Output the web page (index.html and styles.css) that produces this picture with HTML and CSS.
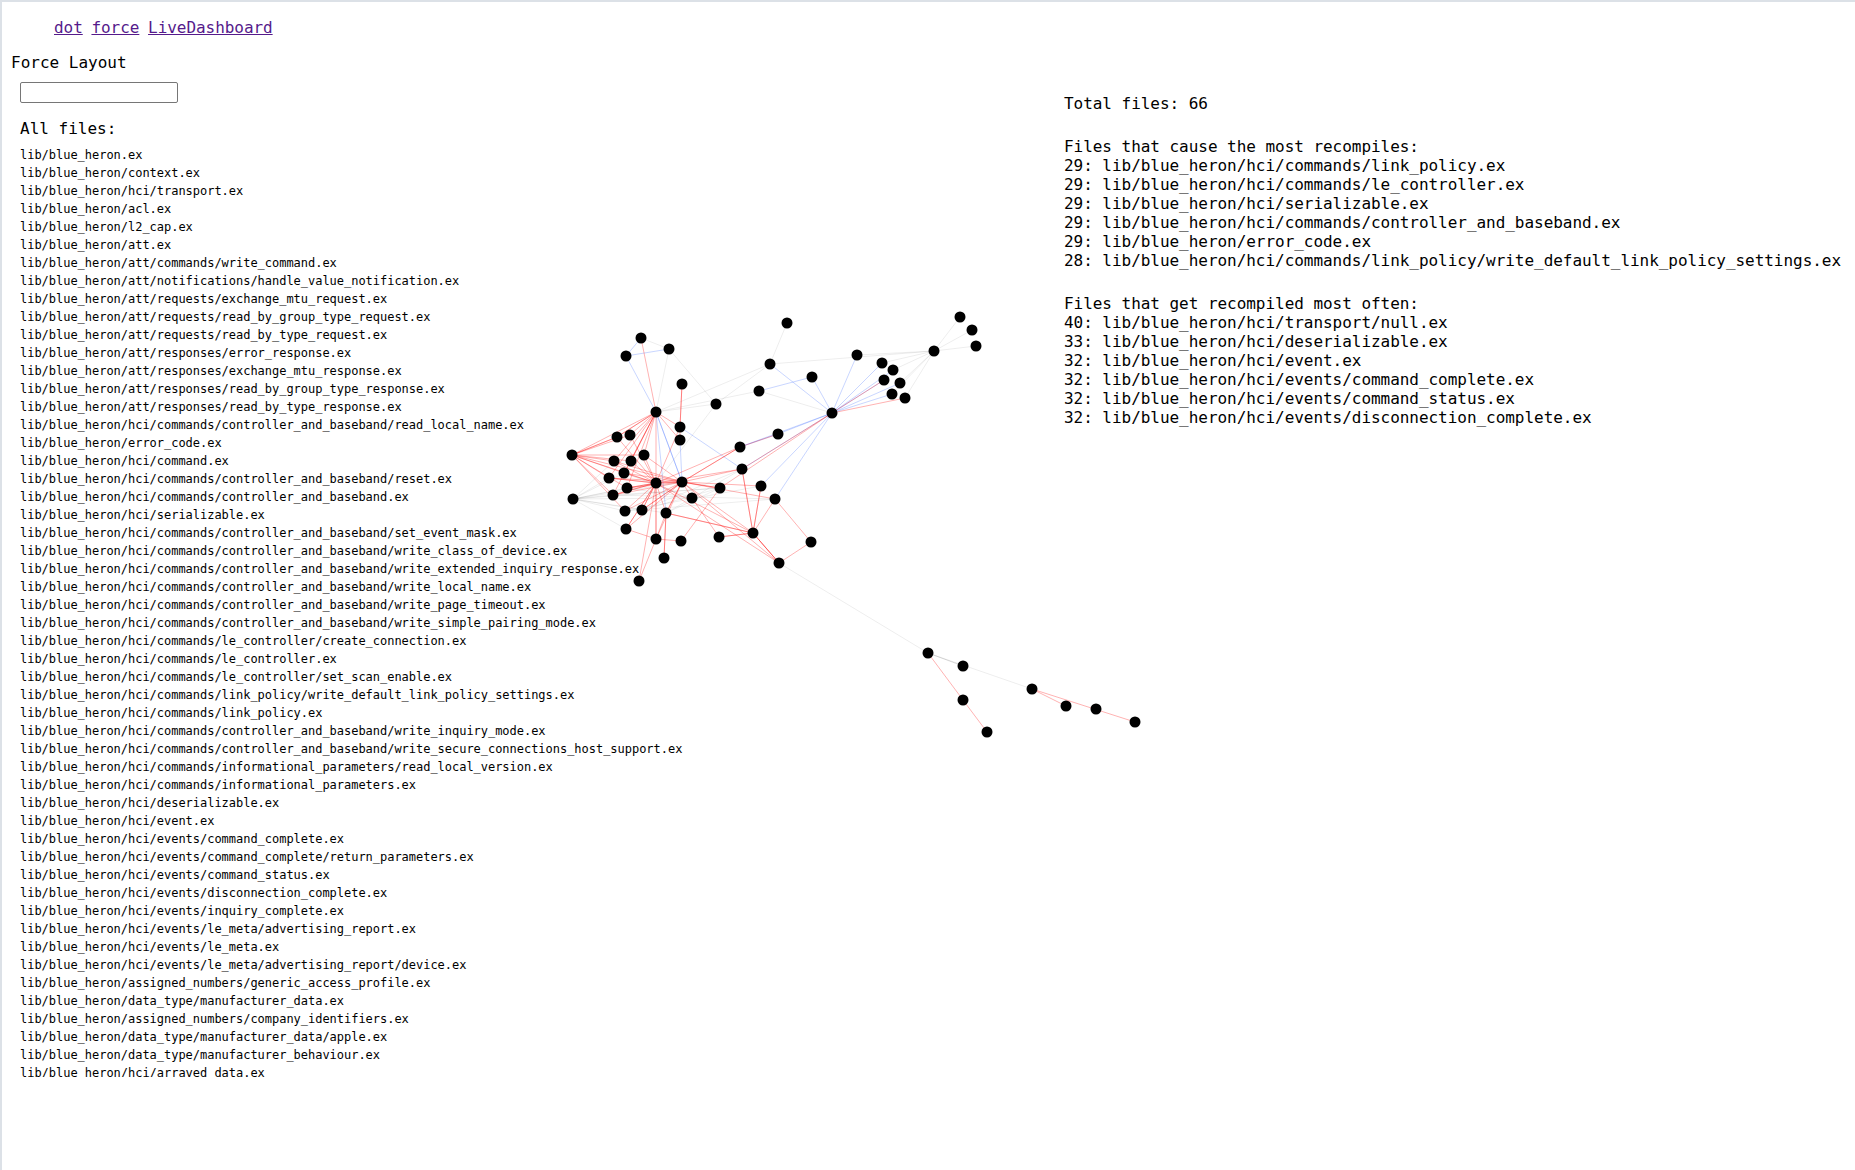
FILE: index.html
```html
<!DOCTYPE html>
<html lang="en">
<head>
  <meta charset="UTF-8">
  <title>Force Layout</title>
  <link rel="stylesheet" href="styles.css">
</head>
<body>

  <nav class="top-links">
    <a href="#dot">dot</a>
    <a href="#force">force</a>
    <a href="#dashboard">LiveDashboard</a>
  </nav>

  <div class="page">
    <section class="files">
      <div class="title">Force Layout</div>
      <div class="file-panel">
        <input class="search" type="text">
        <div class="files-heading">All files:</div>
        <ul class="file-list">
          <li>lib/blue_heron.ex</li>
          <li>lib/blue_heron/context.ex</li>
          <li>lib/blue_heron/hci/transport.ex</li>
          <li>lib/blue_heron/acl.ex</li>
          <li>lib/blue_heron/l2_cap.ex</li>
          <li>lib/blue_heron/att.ex</li>
          <li>lib/blue_heron/att/commands/write_command.ex</li>
          <li>lib/blue_heron/att/notifications/handle_value_notification.ex</li>
          <li>lib/blue_heron/att/requests/exchange_mtu_request.ex</li>
          <li>lib/blue_heron/att/requests/read_by_group_type_request.ex</li>
          <li>lib/blue_heron/att/requests/read_by_type_request.ex</li>
          <li>lib/blue_heron/att/responses/error_response.ex</li>
          <li>lib/blue_heron/att/responses/exchange_mtu_response.ex</li>
          <li>lib/blue_heron/att/responses/read_by_group_type_response.ex</li>
          <li>lib/blue_heron/att/responses/read_by_type_response.ex</li>
          <li>lib/blue_heron/hci/commands/controller_and_baseband/read_local_name.ex</li>
          <li>lib/blue_heron/error_code.ex</li>
          <li>lib/blue_heron/hci/command.ex</li>
          <li>lib/blue_heron/hci/commands/controller_and_baseband/reset.ex</li>
          <li>lib/blue_heron/hci/commands/controller_and_baseband.ex</li>
          <li>lib/blue_heron/hci/serializable.ex</li>
          <li>lib/blue_heron/hci/commands/controller_and_baseband/set_event_mask.ex</li>
          <li>lib/blue_heron/hci/commands/controller_and_baseband/write_class_of_device.ex</li>
          <li>lib/blue_heron/hci/commands/controller_and_baseband/write_extended_inquiry_response.ex</li>
          <li>lib/blue_heron/hci/commands/controller_and_baseband/write_local_name.ex</li>
          <li>lib/blue_heron/hci/commands/controller_and_baseband/write_page_timeout.ex</li>
          <li>lib/blue_heron/hci/commands/controller_and_baseband/write_simple_pairing_mode.ex</li>
          <li>lib/blue_heron/hci/commands/le_controller/create_connection.ex</li>
          <li>lib/blue_heron/hci/commands/le_controller.ex</li>
          <li>lib/blue_heron/hci/commands/le_controller/set_scan_enable.ex</li>
          <li>lib/blue_heron/hci/commands/link_policy/write_default_link_policy_settings.ex</li>
          <li>lib/blue_heron/hci/commands/link_policy.ex</li>
          <li>lib/blue_heron/hci/commands/controller_and_baseband/write_inquiry_mode.ex</li>
          <li>lib/blue_heron/hci/commands/controller_and_baseband/write_secure_connections_host_support.ex</li>
          <li>lib/blue_heron/hci/commands/informational_parameters/read_local_version.ex</li>
          <li>lib/blue_heron/hci/commands/informational_parameters.ex</li>
          <li>lib/blue_heron/hci/deserializable.ex</li>
          <li>lib/blue_heron/hci/event.ex</li>
          <li>lib/blue_heron/hci/events/command_complete.ex</li>
          <li>lib/blue_heron/hci/events/command_complete/return_parameters.ex</li>
          <li>lib/blue_heron/hci/events/command_status.ex</li>
          <li>lib/blue_heron/hci/events/disconnection_complete.ex</li>
          <li>lib/blue_heron/hci/events/inquiry_complete.ex</li>
          <li>lib/blue_heron/hci/events/le_meta/advertising_report.ex</li>
          <li>lib/blue_heron/hci/events/le_meta.ex</li>
          <li>lib/blue_heron/hci/events/le_meta/advertising_report/device.ex</li>
          <li>lib/blue_heron/assigned_numbers/generic_access_profile.ex</li>
          <li>lib/blue_heron/data_type/manufacturer_data.ex</li>
          <li>lib/blue_heron/assigned_numbers/company_identifiers.ex</li>
          <li>lib/blue_heron/data_type/manufacturer_data/apple.ex</li>
          <li>lib/blue_heron/data_type/manufacturer_behaviour.ex</li>
          <li>lib/blue_heron/hci/arrayed_data.ex</li>
        </ul>
      </div>
    </section>

    <section class="stats">
      <p>Total files: 66</p>
      <p>Files that cause the most recompiles:<br>
29: lib/blue_heron/hci/commands/link_policy.ex<br>
29: lib/blue_heron/hci/commands/le_controller.ex<br>
29: lib/blue_heron/hci/serializable.ex<br>
29: lib/blue_heron/hci/commands/controller_and_baseband.ex<br>
29: lib/blue_heron/error_code.ex<br>
28: lib/blue_heron/hci/commands/link_policy/write_default_link_policy_settings.ex</p>
      <p>Files that get recompiled most often:<br>
40: lib/blue_heron/hci/transport/null.ex<br>
33: lib/blue_heron/hci/deserializable.ex<br>
32: lib/blue_heron/hci/event.ex<br>
32: lib/blue_heron/hci/events/command_complete.ex<br>
32: lib/blue_heron/hci/events/command_status.ex<br>
32: lib/blue_heron/hci/events/disconnection_complete.ex</p>
    </section>
  </div>

  <svg class="graph" id="graph" width="1855" height="1170"></svg>

  <script src="graph.js"></script>
</body>
</html>
```

FILE: styles.css
```css
html, body {
  height: 100%;
}
body {
  margin: 0;
  box-sizing: border-box;
  border-top: 2px solid #dce1e7;
  border-left: 2px solid #dce1e7;
  overflow: hidden;
  background-color: white;
  color: black;
  font-family: "DejaVu Sans Mono", monospace;
  font-size: 16px;
}
a {
  color: #551a8b;
}
.top-links {
  display: flex;
  gap: 8.7px;
  padding: 16px 0 0 52px;
  letter-spacing: -0.05px;
}
.page {
  display: grid;
  grid-template-columns: 1062px 1fr;
}
.files {
  padding: 16px 0 0 9px;
}
.file-panel {
  padding-left: 9px;
}
.search {
  display: block;
  box-sizing: border-box;
  width: 158px;
  height: 21px;
  margin: 10px 0 0;
  border: 1px solid #767676;
  border-radius: 2px;
  background-color: white;
}
.files-heading {
  margin-top: 16px;
}
.file-list {
  height: 931px;
  margin: 8px 0 0;
  padding: 0;
  overflow: hidden;
  list-style: none;
  font-size: 12px;
  line-height: 18px;
  letter-spacing: -0.025px;
}
.stats {
  padding-top: 57px;
  white-space: nowrap;
  letter-spacing: -0.04px;
}
.stats p {
  margin: 0 0 24px;
}
.graph {
  position: absolute;
  top: 0;
  left: 0;
  pointer-events: none;
}
.edge {
  stroke-width: 1;
}
.edge-red {
  stroke: rgba(255, 0, 0, 0.3);
}
.edge-blue {
  stroke: rgba(40, 90, 255, 0.25);
}
.edge-grey {
  stroke: rgba(0, 0, 0, 0.07);
}
.node {
  fill: black;
}
```

FILE: graph.js
```js
const nodes = {
  a1: [787, 323], b1: [641, 338], b2: [669, 349], b3: [626, 356], c: [770, 364],
  d: [812, 377], e: [682, 384], f: [759, 391], g: [716, 404], H: [656, 412],
  J: [832, 413], k1: [680, 427], k2: [680, 440], m1: [630, 435], m2: [617, 437],
  n: [778, 434], o: [740, 447], p: [572, 455], q: [644, 455], r1: [614, 461],
  r2: [631, 461], s: [742, 469], t: [624, 473], u: [609, 478], A: [656, 483],
  B: [682, 482], v: [761, 486], w: [720, 488], x: [627, 488], y: [613, 495],
  z: [692, 498], aa: [775, 499], ab: [573, 499], ac: [625, 511], ad: [642, 510],
  ae: [666, 513], af: [626, 529], C: [753, 533], ag: [719, 537], ah: [811, 542],
  ai: [656, 539], aj: [681, 541], ak: [664, 558], al: [779, 563], am: [639, 581],
  bn: [857, 355], bo: [882, 363], bp: [893, 370], bq: [884, 380], br: [900, 383],
  bs: [892, 394], bt: [905, 398], D: [934, 351], be: [960, 317], bf: [972, 330],
  bg: [976, 346], E: [928, 653], F: [963, 666], G: [963, 700], I: [987, 732],
  K: [1032, 689], L: [1066, 706], M: [1096, 709], N: [1135, 722]
};

// each string: a source node, then the nodes it points to
const edges = {
  grey: [
    "a1 c", "c g H D", "H g f", "bn D", "D be bf bg bo bp br bt bs", "f J",
    "b2 b1 g H", "g A", "ab A B z w t u y x r1 ac ad ae", "ab af", "al E",
    "E F F K", "w ae ad y", "aa ac y", "s ae ad", "v ac", "z x t"
  ],
  blue: [
    "b1 b3", "b3 b2 H", "H B B ae", "k1 s", "k2 B", "f d", "c J", "d J",
    "J bn bo bq bp br bs n o s v aa", "n o"
  ],
  red: [
    "b1 H", "H m1 m2 m2 p q r1 r2 t u x A y k1 k2",
    "e k1 k1", "k1 A", "k2 k1",
    "p m2 m2 m1 q r1 r2 t u A B x y ac",
    "A q r1 r2 t u u x x y y ac ad ad af af ai ai am ae B B m1 m2 o s C al",
    "B q r1 t u x y ac ad ad ae ae af ai o o s w w v aa C al z",
    "s C C", "v C C", "aa C", "ae C C", "ag C C", "C al al al",
    "aa ah", "ah al", "w aj", "z ag", "ai af aj am", "ae ak ak ai",
    "J bq bt w s", "o n", "E G", "G I", "K L N"
  ]
};

const svg = document.getElementById("graph");
const SVG_NS = "http://www.w3.org/2000/svg";

for (const color in edges) {
  edges[color].forEach(function (row) {
    const ids = row.split(" ");
    const from = nodes[ids[0]];
    ids.slice(1).forEach(function (id) {
      const line = document.createElementNS(SVG_NS, "line");
      line.setAttribute("class", "edge edge-" + color);
      line.setAttribute("x1", from[0]);
      line.setAttribute("y1", from[1]);
      line.setAttribute("x2", nodes[id][0]);
      line.setAttribute("y2", nodes[id][1]);
      svg.appendChild(line);
    });
  });
}

for (const id in nodes) {
  const dot = document.createElementNS(SVG_NS, "circle");
  dot.setAttribute("class", "node");
  dot.setAttribute("cx", nodes[id][0]);
  dot.setAttribute("cy", nodes[id][1]);
  dot.setAttribute("r", 5.5);
  svg.appendChild(dot);
}
```
